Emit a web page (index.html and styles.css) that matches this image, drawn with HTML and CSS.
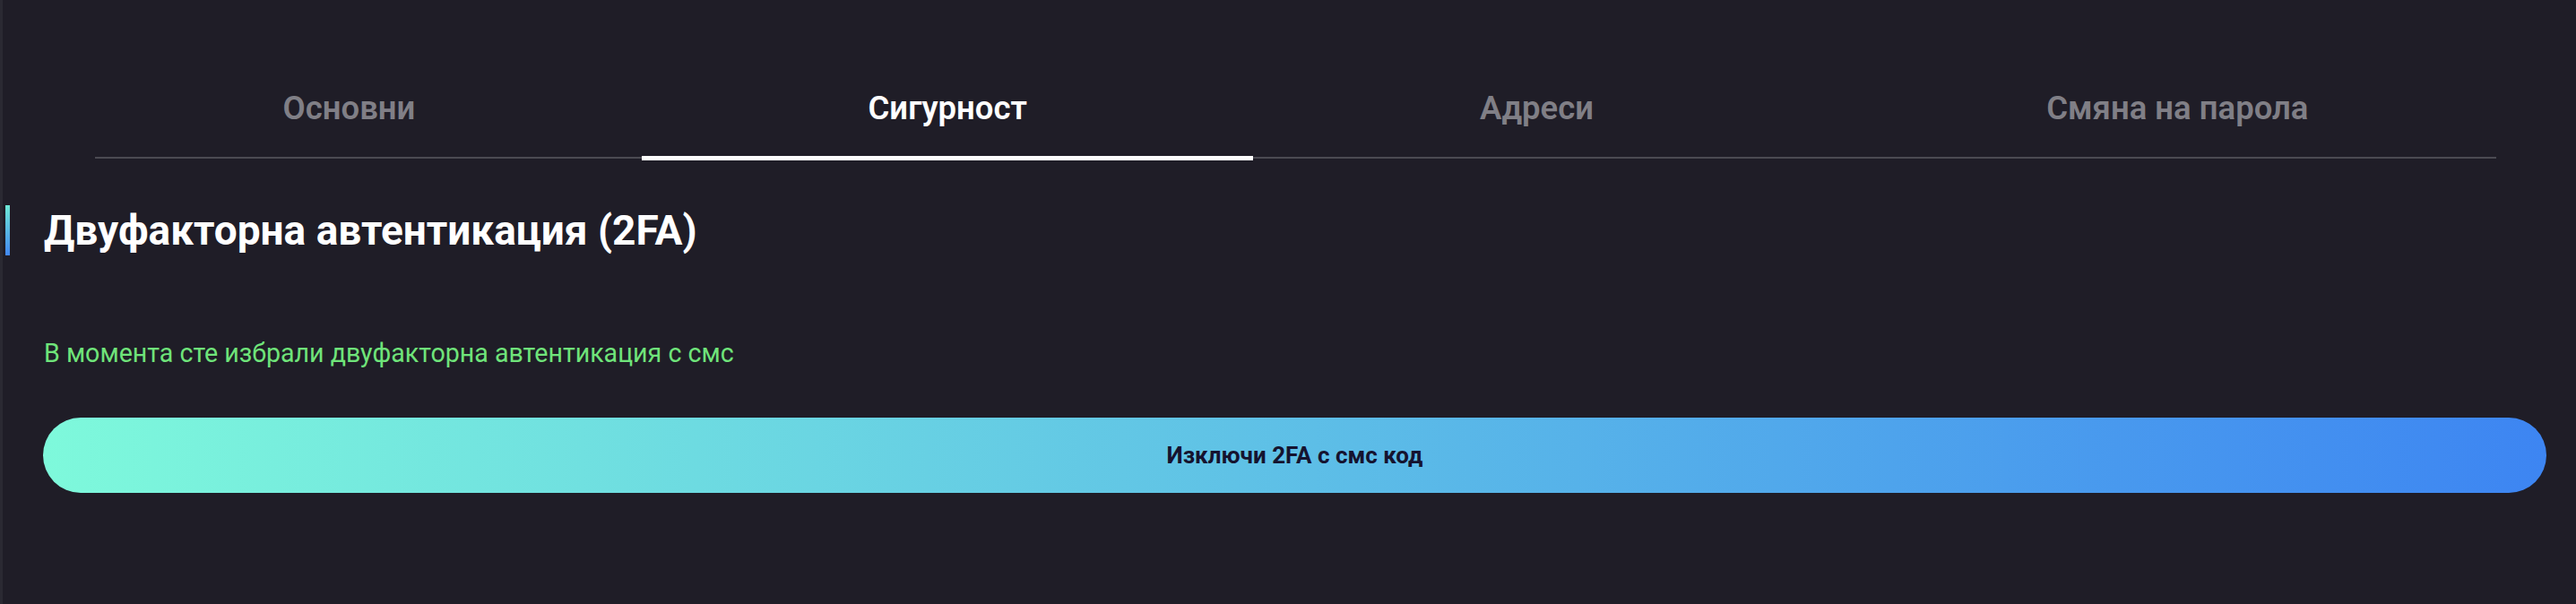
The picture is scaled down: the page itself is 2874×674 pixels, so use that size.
FILE: index.html
```html
<!DOCTYPE html>
<html>
<head>
  <title>Профил - Сигурност</title>
  <link rel="stylesheet" href="styles.css">
</head>
<body>

  <div class="page">
    <div class="tabs">
      <div class="tab">Основни</div>
      <div class="tab active">Сигурност</div>
      <div class="tab">Адреси</div>
      <div class="tab">Смяна на парола</div>
    </div>

    <h2 class="section-title">Двуфакторна автентикация (2FA)</h2>

    <p class="status">В момента сте избрали двуфакторна автентикация с смс</p>

    <button class="gradient-btn">Изключи 2FA с смс код</button>
  </div>

</body>
</html>
```

FILE: styles.css
```css
body{
margin: 0;
background-color: #1f1d27;
border-left: 3px solid #2a2932;
min-height: 674px;
box-sizing: border-box;
font-family: Roboto, "Noto Sans", sans-serif;
color: white;
}
.page{
padding: 62px 33px 0 45px;
}
.tabs{
display: flex;
position: relative;
margin: 0 13px 0 15px;
}
.tabs::after{
content: "";
position: absolute;
left: 43px;
right: 43px;
bottom: 2px;
height: 2px;
background-color: #4b4a52;
}
.tab{
flex: 1 1 auto;
text-align: center;
font-size: 36.5px;
font-weight: 600;
line-height: 54px;
padding: 32px 0 26px 0;
color: #807f86;
border-bottom: 5px solid transparent;
position: relative;
z-index: 1;
}
.tab.active{
color: white;
border-bottom-color: white;
}
.section-title{
position: relative;
margin: 50px 0 0 1px;
font-size: 46px;
font-weight: 700;
line-height: 56px;
}
.section-title::before{
content: "";
position: absolute;
left: -43px;
top: 0;
width: 5px;
height: 56px;
background: linear-gradient(to bottom, #6ee9d6, #4287f0);
}
.status{
margin: 88px 0 0 1px;
font-size: 28.6px;
line-height: 42px;
color: #6fe47a;
}
.gradient-btn{
display: block;
width: 100%;
height: 84px;
margin-top: 51px;
border: none;
border-radius: 42px;
background: linear-gradient(to right, #7ef9db, #3d85f2);
color: #15132f;
font-family: Roboto, "Noto Sans", sans-serif;
font-size: 26px;
font-weight: 700;
}
```
